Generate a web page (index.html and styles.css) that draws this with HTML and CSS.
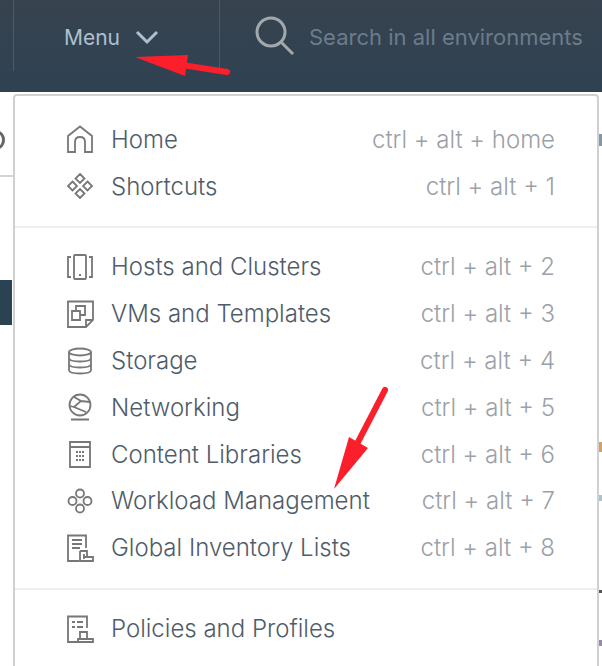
FILE: index.html
```html
<!DOCTYPE html>
<html lang="en">
<head>
  <meta charset="UTF-8">
  <meta name="viewport" content="width=device-width, initial-scale=1.0">
  <title>Menu</title>
  <link rel="stylesheet" href="styles.css">
</head>
<body>
  <div class="page">
    <header class="topbar">
      <div class="topbar-start"></div>
      <div class="menu-toggle">
        <span>Menu</span>
        <svg class="chevron" width="26" height="16" viewBox="0 0 26 16"><path d="M3 3 L13 13 L23 3"/></svg>
      </div>
      <div class="search">
        <svg class="search-icon" width="42" height="42" viewBox="0 0 42 42"><circle cx="17" cy="17" r="14"/><path d="M27 27 L39 39"/></svg>
        <span class="search-text">Search in all environments</span>
      </div>
    </header>

    <aside class="behind">
      <div class="behind-head"><span class="behind-ring"></span></div>
      <div class="behind-selected"></div>
    </aside>

    <div class="edge-specks">
      <i class="speck speck-a"></i>
      <i class="speck speck-b"></i>
      <i class="speck speck-c"></i>
      <i class="speck speck-d"></i>
      <i class="speck speck-e"></i>
    </div>

    <nav class="dropdown">
      <ul class="menu-group">
        <li class="menu-item">
          <svg class="icon" viewBox="0 0 28 28"><path d="M2 27 V11 L14 1.500 L26 11 V27 H19 V17 Q19 12 14 12 Q9 12 9 17 V27 Z"/></svg>
          <span class="label">Home</span><span class="keys">ctrl + alt + home</span>
        </li>
        <li class="menu-item">
          <svg class="icon" viewBox="0 0 28 28"><path d="M14 2 L18.500 6.500 L14 11 L9.500 6.500 Z M14 17 L18.500 21.500 L14 26 L9.500 21.500 Z M6.500 9.500 L11 14 L6.500 18.500 L2 14 Z M21.500 9.500 L26 14 L21.500 18.500 L17 14 Z"/></svg>
          <span class="label">Shortcuts</span><span class="keys">ctrl + alt + 1</span>
        </li>
      </ul>

      <ul class="menu-group">
        <li class="menu-item">
          <svg class="icon" viewBox="0 0 28 28"><path d="M9 2 H19 Q20 2 20 3 V25 Q20 26 19 26 H9 Q8 26 8 25 V3 Q8 2 9 2 Z M13 22 H15 M5 4 H2 V24 H5 M23 4 H26 V24 H23"/></svg>
          <span class="label">Hosts and Clusters</span><span class="keys">ctrl + alt + 2</span>
        </li>
        <li class="menu-item">
          <svg class="icon" viewBox="0 0 28 28"><path d="M20 27 H2 V1.500 H27 V20 Z M27 20 H20 V27 M6 11 H14 V20 H6 Z M10 11 V6 H19 V15 H14"/></svg>
          <span class="label">VMs and Templates</span><span class="keys">ctrl + alt + 3</span>
        </li>
        <li class="menu-item">
          <svg class="icon" viewBox="0 0 28 28"><ellipse cx="14" cy="5" rx="11" ry="3.500"/><path d="M3 5 V23 Q3 26.500 14 26.500 Q25 26.500 25 23 V5 M3 11 Q3 14.500 14 14.500 Q25 14.500 25 11 M3 17 Q3 20.500 14 20.500 Q25 20.500 25 17"/></svg>
          <span class="label">Storage</span><span class="keys">ctrl + alt + 4</span>
        </li>
        <li class="menu-item">
          <svg class="icon" viewBox="0 0 28 28"><circle cx="14" cy="12" r="10.500"/><path d="M8 4 L15 8 L8 14 L20 19 M15 8 L24 9 M8 14 L4 13 M5 26.500 H23"/></svg>
          <span class="label">Networking</span><span class="keys">ctrl + alt + 5</span>
        </li>
        <li class="menu-item">
          <svg class="icon" viewBox="0 0 28 28"><path d="M4 27 H24 V2 H4 Z M4 7 H24 M10 12 H12 M13 12 H15 M16 12 H18 M10 16 H12 M13 16 H15 M16 16 H18 M10 20 H12 M13 20 H15 M16 20 H18"/></svg>
          <span class="label">Content Libraries</span><span class="keys">ctrl + alt + 6</span>
        </li>
        <li class="menu-item">
          <svg class="icon" viewBox="0 0 28 28"><circle cx="14" cy="6.500" r="4"/><circle cx="14" cy="21.500" r="4"/><circle cx="6.500" cy="14" r="4"/><circle cx="21.500" cy="14" r="4"/></svg>
          <span class="label">Workload Management</span><span class="keys">ctrl + alt + 7</span>
        </li>
        <li class="menu-item">
          <svg class="icon" viewBox="0 0 28 28"><path d="M13 27 H2 V1.500 H20 V14 M6 6 H16 M6 10 H16 M6 14 H14 M14 17 H21 V23 M17 23 H27 V27 H14 V17 M18 20 V25"/></svg>
          <span class="label">Global Inventory Lists</span><span class="keys">ctrl + alt + 8</span>
        </li>
      </ul>

      <ul class="menu-group">
        <li class="menu-item">
          <svg class="icon" viewBox="0 0 28 28"><path d="M13 27 H2 V1.500 H21 V13 M6 7 H9 M11 7 H17 M6 12 H9 M11 12 H17 M13 17 H21 V24 M14 17 V24 M12 24 H27 V27 H12 Z"/></svg>
          <span class="label">Policies and Profiles</span>
        </li>
      </ul>
    </nav>

    <svg class="arrows" width="602" height="666" viewBox="0 0 602 666">
      <path class="arrow-line" d="M227 72 L182 65"/>
      <path class="arrow-head" d="M135 57 L188 55 L185 76 Z"/>
      <path class="arrow-line" d="M385 390 L358 442"/>
      <path class="arrow-head" d="M334 489 L349 437 L368 448 Z"/>
    </svg>
  </div>
</body>
</html>
```

FILE: styles.css
```css
* {
  box-sizing: border-box;
}

body {
  margin: 0;
  font-family: "Inter", "Noto Sans", sans-serif;
  background-color: #fff;
}

.page {
  position: relative;
  width: 602px;
  height: 666px;
  overflow: hidden;
}

.topbar {
  display: flex;
  height: 92px;
  background: linear-gradient(#37434f, #2f4252);
}

.topbar-start {
  width: 14px;
  height: 71px;
  border-right: 1px solid #4d5a66;
}

.menu-toggle {
  display: flex;
  align-items: center;
  gap: 14px;
  width: 206px;
  height: 71px;
  padding-left: 50px;
  padding-top: 3px;
  border-right: 1px solid #4d5a66;
  color: #acc0d0;
  font-size: 21px;
}

.chevron {
  fill: none;
  stroke: #acc0d0;
  stroke-width: 3;
}

.search {
  display: flex;
  align-items: center;
  gap: 13px;
  height: 71px;
  padding-left: 34px;
  white-space: nowrap;
}

.search-icon {
  flex: none;
  fill: none;
  stroke: #a3a8ad;
  stroke-width: 3;
}

.search-text {
  padding-top: 2px;
  color: #6b7c8a;
  font-size: 22px;
}

.behind {
  width: 14px;
}

.behind-head {
  height: 85px;
  border-bottom: 2px solid #d4d4d4;
  overflow: hidden;
}

.behind-ring {
  display: block;
  width: 14px;
  height: 18px;
  margin: 39px 0 0 -9px;
  border: 3px solid #666;
  border-radius: 50%;
}

.behind-selected {
  width: 12px;
  height: 45px;
  margin-top: 103px;
  background-color: #2b4252;
}

.speck {
  position: absolute;
  right: 0;
  width: 3px;
}

.speck-a {
  top: 134px;
  height: 12px;
  background-color: #7f99a8;
}

.speck-b {
  top: 442px;
  height: 10px;
  background-color: #d8a060;
}

.speck-c {
  top: 495px;
  height: 6px;
  background-color: #a8c4cc;
}

.speck-d {
  top: 590px;
  height: 3px;
  background-color: #555;
}

.speck-e {
  top: 640px;
  height: 6px;
  background-color: #9a88b0;
}

.dropdown {
  position: absolute;
  left: 13px;
  top: 94px;
  width: 586px;
  height: 600px;
  padding-top: 4px;
  background-color: #fff;
  border: 2px solid #d0d0d0;
  border-radius: 4px;
}

.menu-group {
  margin: 0;
  padding: 16px 42px 16px 51px;
  list-style: none;
  border-bottom: 2px solid #eee;
}

.menu-group:nth-child(2) {
  padding-bottom: 17px;
}

.menu-group:last-child {
  padding-top: 15px;
  border-bottom: none;
}

.menu-item {
  display: flex;
  align-items: center;
  height: 46.800px;
  font-size: 24px;
  font-weight: 300;
  white-space: nowrap;
}

.icon {
  flex: none;
  width: 28px;
  height: 28px;
  margin-right: 17px;
  fill: none;
  stroke: #777;
  stroke-width: 1.800;
}

.label {
  flex: 1;
  color: #4f5c69;
}

.keys {
  color: #9ba1a8;
}

.arrows {
  position: absolute;
  left: 0;
  top: 0;
  pointer-events: none;
}

.arrow-line {
  fill: none;
  stroke: #fb1f2b;
  stroke-width: 6;
  stroke-linecap: round;
}

.arrow-head {
  fill: #fb1f2b;
}
```
